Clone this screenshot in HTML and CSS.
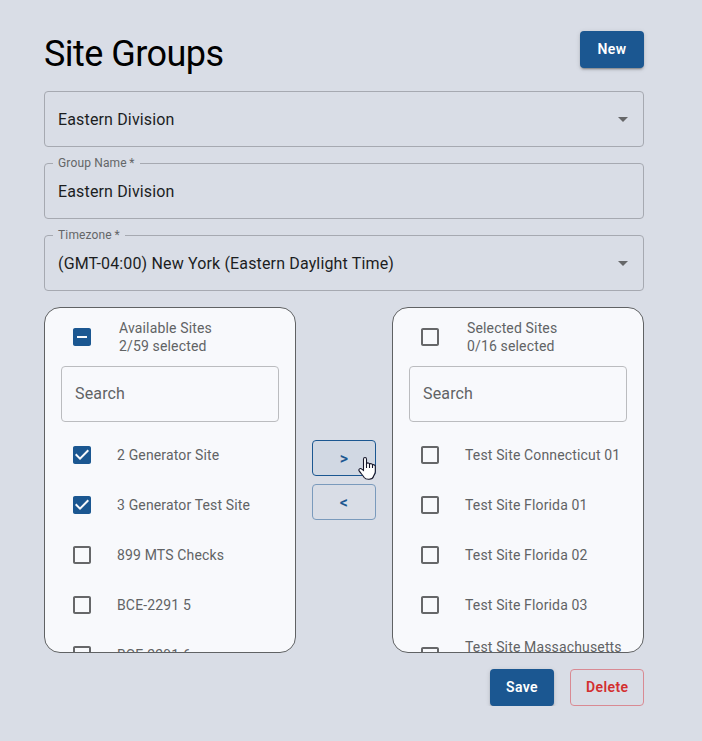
FILE: index.html
```html
<!DOCTYPE html>
<html lang="en">
<head>
<meta charset="utf-8">
<title>Site Groups</title>
<link rel="stylesheet" href="styles.css">
</head>
<body>
<svg width="0" height="0" class="defs">
  <symbol id="box" viewBox="0 0 24 24"><path d="M19 5v14H5V5h14m0-2H5c-1.100 0-2 .9-2 2v14c0 1.100.9 2 2 2h14c1.100 0 2-.9 2-2V5c0-1.100-.9-2-2-2z"/></symbol>
  <symbol id="checked" viewBox="0 0 24 24"><path d="M19 3H5c-1.110 0-2 .9-2 2v14c0 1.100.89 2 2 2h14c1.110 0 2-.9 2-2V5c0-1.100-.89-2-2-2zm-9 14l-5-5 1.410-1.410L10 14.170l7.590-7.590L19 8l-9 9z"/></symbol>
  <symbol id="mixed" viewBox="0 0 24 24"><path d="M19 3H5c-1.100 0-2 .9-2 2v14c0 1.100.9 2 2 2h14c1.100 0 2-.9 2-2V5c0-1.100-.9-2-2-2zm-2 10H7v-2h10v2z"/></symbol>
  <symbol id="arrow" viewBox="0 0 24 24"><path d="M7 10l5 5 5-5z"/></symbol>
</svg>
<main class="page">
  <header class="top">
    <h1>Site Groups</h1>
    <button class="btn filled">New</button>
  </header>
  <div class="field plain"><span>Eastern Division</span><svg class="icon"><use href="#arrow"/></svg></div>
  <fieldset class="field labelled"><legend>Group Name&thinsp;*</legend><span>Eastern Division</span></fieldset>
  <fieldset class="field labelled"><legend>Timezone&thinsp;*</legend><span>(GMT-04:00) New York (Eastern Daylight Time)</span><svg class="icon"><use href="#arrow"/></svg></fieldset>
  <section class="transfer">
    <div class="card">
      <div class="card-head"><svg class="icon on"><use href="#mixed"/></svg><div>Available Sites<br>2/59 selected</div></div>
      <div class="search">Search</div>
      <ul>
        <li><svg class="icon on"><use href="#checked"/></svg><span>2 Generator Site</span></li>
        <li><svg class="icon on"><use href="#checked"/></svg><span>3 Generator Test Site</span></li>
        <li><svg class="icon"><use href="#box"/></svg><span>899 MTS Checks</span></li>
        <li><svg class="icon"><use href="#box"/></svg><span>BCE-2291 5</span></li>
        <li><svg class="icon"><use href="#box"/></svg><span>BCE-2291 6</span></li>
      </ul>
    </div>
    <div class="moves">
      <button class="btn outline hover">&gt;
        <svg class="cursor" viewBox="0 0 18 24"><path d="M5.500 14.500V3.200C5.500 1 8.500 1 8.500 3.200V7.500C9.500 6.500 11.200 6.800 11.500 8C12.600 7.200 14.200 7.700 14.500 8.900C15.900 8.300 17.300 9 17.300 10.500V15.500C17.300 18 15.800 19 15.500 20.500C14.500 24 8 24 6.200 21.500C5 19.500 3.500 18 1.300 15.200C0 13 2.300 11.800 3.800 13.200Z"/><path class="fingers" d="M8.500 7.500V12M11.500 8V12M14.500 9V12"/></svg>
      </button>
      <button class="btn outline">&lt;</button>
    </div>
    <div class="card">
      <div class="card-head"><svg class="icon"><use href="#box"/></svg><div>Selected Sites<br>0/16 selected</div></div>
      <div class="search">Search</div>
      <ul>
        <li><svg class="icon"><use href="#box"/></svg><span>Test Site Connecticut 01</span></li>
        <li><svg class="icon"><use href="#box"/></svg><span>Test Site Florida 01</span></li>
        <li><svg class="icon"><use href="#box"/></svg><span>Test Site Florida 02</span></li>
        <li><svg class="icon"><use href="#box"/></svg><span>Test Site Florida 03</span></li>
        <li><svg class="icon"><use href="#box"/></svg><span>Test Site Massachusetts 01</span></li>
      </ul>
    </div>
  </section>
  <footer class="actions"><button class="btn filled">Save</button><button class="btn danger">Delete</button></footer>
</main>
</body>
</html>
```
FILE: styles.css
```css
* { box-sizing: border-box; }
body { margin: 0; background: #d9dde6; font-family: Roboto, "Liberation Sans", sans-serif; color: #1c1d1f; }
.defs { display: block; }
.page { width: 600px; margin: 31px 0 0 44px; display: flex; flex-direction: column; gap: 16px; }
.top { display: flex; justify-content: space-between; align-items: flex-start; height: 44px; }
h1 { margin: 0; font-size: 36px; line-height: 46px; font-weight: 400; letter-spacing: -.55px; color: #000; }
.btn { position: relative; min-width: 64px; height: 37px; padding: 0 15px 2px; border: 1px solid transparent; border-radius: 4px; background: none; font: 600 14px/24px Roboto, sans-serif; letter-spacing: .4px; }
.filled { background: #1b5791; color: #fff; box-shadow: 0 3px 1px -2px rgba(0,0,0,.2), 0 2px 2px rgba(0,0,0,.14), 0 1px 5px rgba(0,0,0,.12); }
.danger { width: 74px; border-color: #d98a93; color: #d32f2f; }
.outline { height: 36px; padding-top: 2px; padding-bottom: 0; border-color: #7a9abc; color: #1b5791; font-size: 16px; }
.outline.hover { border-color: #1b5791; background: #d1d8e3; }
.cursor { position: absolute; left: 45px; top: 15px; width: 18px; height: 24px; fill: #fff; stroke: #151528; stroke-width: 1.1; }
.cursor .fingers { fill: none; }
.field { display: flex; justify-content: space-between; width: 600px; height: 56px; margin: 0; padding: 15px 8px 0 13px; border: 1px solid #a6a9b1; border-radius: 4px; font-size: 16px; line-height: 24px; letter-spacing: .15px; }
.field span { line-height: 26px; }
.labelled { height: 63px; margin-top: -7px; padding-top: 9px; }
.field legend { margin-left: -5px; padding: 0 5px; font-size: 12px; line-height: 14px; color: #646668; }
.icon { width: 24px; height: 24px; flex: none; fill: #666769; }
.on { fill: #1b5791; }
.transfer { display: flex; gap: 16px; height: 346px; }
.card { width: 252px; padding: 11px 16px 0; overflow: hidden; border: 1px solid #606264; border-radius: 16px; background: #f8f9fc; color: #616365; font-size: 14px; line-height: 18px; letter-spacing: .15px; }
.card-head { display: flex; align-items: center; gap: 25px; height: 36px; padding-left: 9px; }
.search { height: 56px; margin-top: 11px; padding: 15px 13px; border: 1px solid #bbbcbf; border-radius: 4px; font-size: 16px; line-height: 24px; }
ul { list-style: none; margin: 8px 0 0; padding: 0; }
li { display: flex; align-items: center; gap: 23px; min-height: 50px; padding: 8px 0 8px 9px; }
.moves { display: flex; flex-direction: column; justify-content: center; gap: 8px; width: 64px; }
.actions { display: flex; justify-content: flex-end; gap: 16px; }
```
